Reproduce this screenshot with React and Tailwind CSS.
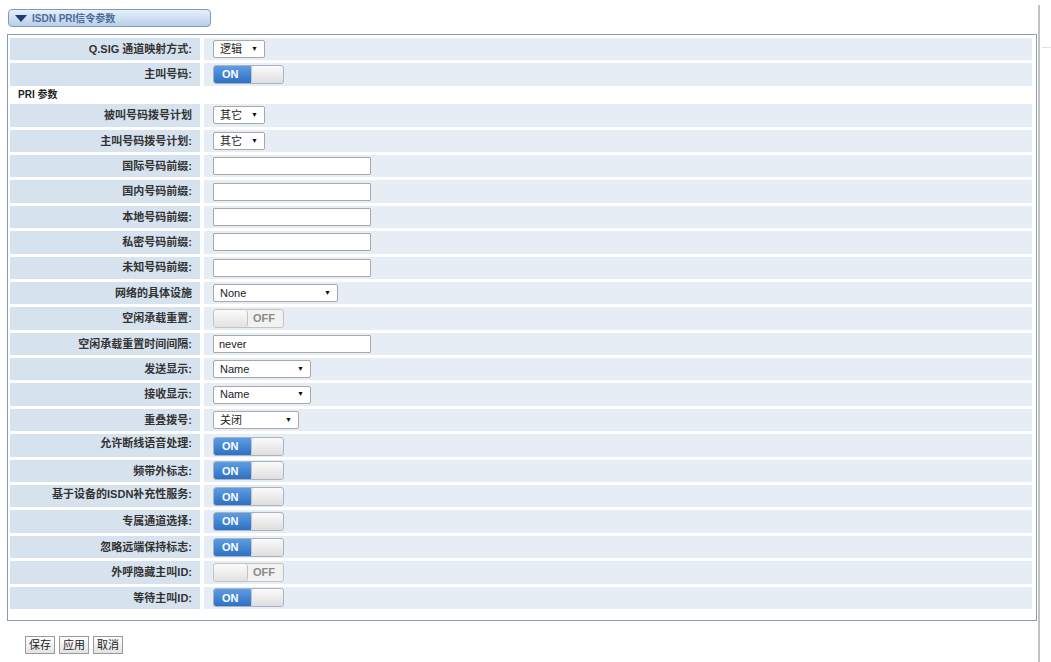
import React from 'react';

const rows1 = [
  { label: 'Q.SIG 通道映射方式:', type: 'select', value: '逻辑', w: 'w-[52px]' },
  { label: '主叫号码:', type: 'on' },
];

const rows2 = [
  { label: '被叫号码拨号计划', type: 'select', value: '其它', w: 'w-[52px]' },
  { label: '主叫号码拨号计划:', type: 'select', value: '其它', w: 'w-[52px]' },
  { label: '国际号码前缀:', type: 'input' },
  { label: '国内号码前缀:', type: 'input' },
  { label: '本地号码前缀:', type: 'input' },
  { label: '私密号码前缀:', type: 'input' },
  { label: '未知号码前缀:', type: 'input' },
  { label: '网络的具体设施', type: 'select', value: 'None', w: 'w-[125px]' },
  { label: '空闲承载重置:', type: 'off' },
  { label: '空闲承载重置时间间隔:', type: 'input', value: 'never' },
  { label: '发送显示:', type: 'select', value: 'Name', w: 'w-[98px]' },
  { label: '接收显示:', type: 'select', value: 'Name', w: 'w-[98px]' },
  { label: '重叠拨号:', type: 'select', value: '关闭', w: 'w-[86px]' },
  { label: '允许断线语音处理:', type: 'on', up: true },
  { label: '频带外标志:', type: 'on' },
  { label: '基于设备的ISDN补充性服务:', type: 'on', up: true },
  { label: '专属通道选择:', type: 'on' },
  { label: '忽略远端保持标志:', type: 'on' },
  { label: '外呼隐藏主叫ID:', type: 'off' },
  { label: '等待主叫ID:', type: 'on' },
];

function Select({ value, w }) {
  return (
    <div className={`${w} h-[18px] bg-white border border-[#a9a9a9] rounded-[2px] flex items-center justify-between pl-[6px] pr-[6px] text-[11px] text-[#222]`}>
      <span>{value}</span>
      <span className="text-[7px] text-[#111]">▼</span>
    </div>
  );
}

function Input({ value }) {
  return (
    <div className="w-[158px] h-[18px] bg-white border border-[#a9a9a9] rounded-[1px] flex items-center pl-[5px] text-[11px] text-[#222]">
      {value}
    </div>
  );
}

function Toggle({ on }) {
  if (on) {
    return (
      <div className="w-[71px] h-[19px] rounded-[3px] border border-[#a9b4c2] overflow-hidden flex">
        <div className="w-[37px] h-full bg-gradient-to-b from-[#5c9de2] to-[#2e70c4] flex items-center pl-[8px] text-[11px] font-bold text-white">ON</div>
        <div className="flex-1 h-full bg-gradient-to-b from-[#fbfbfb] to-[#dedede] border-l border-[#c4c4c4] rounded-[3px]" />
      </div>
    );
  }
  return (
    <div className="w-[71px] h-[19px] rounded-[3px] border border-[#c4c4c4] overflow-hidden flex bg-[#f2f2f2]">
      <div className="w-[34px] h-full bg-gradient-to-b from-[#fbfbfb] to-[#e2e2e2] border-r border-[#c4c4c4] rounded-[3px]" />
      <div className="flex-1 h-full flex items-center pl-[5px] text-[11px] font-bold text-[#8a8a8a]">OFF</div>
    </div>
  );
}

function Row({ r }) {
  return (
    <div className="flex gap-[4px] h-[22.4px]">
      <div className={`w-[190px] bg-[#d6e2ee] flex justify-end pr-[8px] text-[11px] font-bold text-[#333] whitespace-nowrap ${r.up ? 'items-start pt-[1px]' : 'items-center'}`}>
        {r.label}
      </div>
      <div className={`flex-1 bg-[#e6edf5] flex pl-[9px] ${r.up ? 'items-end pb-[1px]' : 'items-center'}`}>
        {r.type === 'select' && <Select value={r.value} w={r.w} />}
        {r.type === 'input' && <Input value={r.value} />}
        {r.type === 'on' && <Toggle on />}
        {r.type === 'off' && <Toggle on={false} />}
      </div>
    </div>
  );
}

export default function App() {
  return (
    <div className="relative h-[662px] bg-white font-['Liberation_Sans','Noto_Sans_CJK_SC',sans-serif] text-[#333] overflow-hidden">
      {/* header tab */}
      <div className="pl-[8px] pt-[9px]">
        <div className="w-[203px] h-[18px] rounded-[4px] border border-[#7d9bc1] bg-gradient-to-b from-[#e6eff9] to-[#b9cfe8] flex items-center pl-[6px] gap-[5px]">
          <svg width="12" height="7" viewBox="0 0 12 7"><polygon points="0,0 12,0 6,7" fill="#1e3d78" /></svg>
          <span className="text-[10px] font-bold text-[#4a6a9c]">ISDN PRI信令参数</span>
        </div>
      </div>

      {/* panel */}
      <div className="ml-[7px] mt-[7px] w-[1030px] border border-[#8c9db2] pl-[2px] pr-[4px] pt-[3px] pb-[11px] flex flex-col gap-[3px]">
        {rows1.map((r) => <Row key={r.label} r={r} />)}
        <div className="h-[12.4px] flex items-center pl-[8px] text-[10px] font-bold text-[#222]">PRI 参数</div>
        {rows2.map((r) => <Row key={r.label} r={r} />)}
      </div>

      {/* buttons */}
      <div className="ml-[25px] mt-[15px] flex gap-[4px]">
        {['保存', '应用', '取消'].map((b) => (
          <button key={b} className="w-[30px] h-[18px] border border-[#9a9a9a] bg-gradient-to-b from-[#ffffff] to-[#e3e3e3] text-[11px] text-[#222] flex items-center justify-center">
            {b}
          </button>
        ))}
      </div>

      {/* scroll edge */}
      <div className="absolute left-[1038px] top-[5px] bottom-0 w-[2px] bg-[#c2c2c2]" />
      <div className="absolute left-[1042px] top-[47px] w-[9px] h-[1px] bg-[#e2e2e2]" />
    </div>
  );
}
